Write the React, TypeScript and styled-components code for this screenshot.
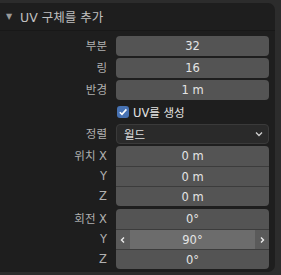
import React from "react";
import styled, { createGlobalStyle } from "styled-components";

const GlobalStyle = createGlobalStyle`
  body {
    margin: 0;
    background: #2c2c2c;
    font-family: "DejaVu Sans", "Noto Sans CJK KR", sans-serif;
  }
`;

const Panel = styled.div`
  width: 275px;
  height: 269px;
  margin-top: 3px;
  background: #1e1e1e;
  border-radius: 0 7px 7px 0;
  box-sizing: border-box;
  overflow: hidden;
`;

const Header = styled.div`
  height: 28px;
  display: flex;
  align-items: center;
  padding-left: 6px;
  gap: 5px;
  color: #c0c0c0;
  font-size: 12.5px;
  border-bottom: 1px solid #181818;
  box-sizing: border-box;
`;

const Caret = styled.span`
  font-size: 8px;
  color: #9a9a9a;
  width: 9px;
`;

const Body = styled.div`
  display: flex;
  flex-direction: column;
  gap: 2px;
  padding: 3px 6px 0 0;
`;

const Row = styled.div<{ $top?: number }>`
  display: grid;
  grid-template-columns: 107px 1fr;
  column-gap: 9px;
  margin-top: ${(p) => p.$top || 0}px;
`;

const Labels = styled.div`
  display: flex;
  flex-direction: column;
`;

const Label = styled.div`
  height: 20px;
  line-height: 20px;
  text-align: right;
  color: #b0b0b0;
  font-size: 11.5px;
  white-space: nowrap;
`;

const Field = styled.div<{ $pos?: "single" | "first" | "mid" | "last" }>`
  height: 20px;
  box-sizing: border-box;
  background: #545454;
  color: #e4e4e4;
  font-size: 11.5px;
  display: flex;
  align-items: center;
  justify-content: center;
  border-radius: ${(p) =>
    p.$pos === "first"
      ? "4px 4px 0 0"
      : p.$pos === "mid"
      ? "0"
      : p.$pos === "last"
      ? "0 0 4px 4px"
      : "4px"};
  border-top: ${(p) => (p.$pos === "mid" || p.$pos === "last" ? "1px solid #3c3c3c" : "none")};
`;

const HoverField = styled(Field)`
  background: #6c6c6c;
  justify-content: space-between;
  overflow: hidden;
`;

const Arrow = styled.span`
  width: 14px;
  height: 100%;
  background: #5a5a5a;
  display: flex;
  align-items: center;
  justify-content: center;
`;

const Group = styled.div`
  display: flex;
  flex-direction: column;
`;

const CheckRow = styled.div`
  height: 20px;
  display: flex;
  align-items: center;
  gap: 4px;
  padding-left: 1px;
  color: #e2e2e2;
  font-size: 11.5px;
`;

const Box = styled.span`
  width: 12px;
  height: 12px;
  border-radius: 3px;
  background: #4772b3;
  display: flex;
  align-items: center;
  justify-content: center;
`;

const Select = styled.div`
  height: 20px;
  box-sizing: border-box;
  background: #2a2a2a;
  border: 1px solid #3a3a3a;
  border-radius: 4px;
  display: flex;
  align-items: center;
  justify-content: space-between;
  padding: 0 4px 0 7px;
  color: #dedede;
  font-size: 11.5px;
`;

type Num = { label: string; value: string };

const Chevron = ({ dir }: { dir: "left" | "right" }) => (
  <svg width="8" height="8" viewBox="0 0 8 8">
    <path
      d={dir === "left" ? "M5 1.5 L2.5 4 L5 6.5" : "M3 1.5 L5.5 4 L3 6.5"}
      fill="none"
      stroke="#ececec"
      strokeWidth="1.4"
    />
  </svg>
);

const NumberGroup = ({ items, hover }: { items: Num[]; hover?: number }) => (
  <>
    <Labels>
      {items.map((it) => (
        <Label key={it.label}>{it.label}</Label>
      ))}
    </Labels>
    <Group>
      {items.map((it, i) => {
        const pos = i === 0 ? "first" : i === items.length - 1 ? "last" : "mid";
        if (i === hover) {
          return (
            <HoverField key={i} $pos={pos}>
              <Arrow>
                <Chevron dir="left" />
              </Arrow>
              {it.value}
              <Arrow>
                <Chevron dir="right" />
              </Arrow>
            </HoverField>
          );
        }
        return (
          <Field key={i} $pos={pos}>
            {it.value}
          </Field>
        );
      })}
    </Group>
  </>
);

export default function App() {
  return (
    <>
      <GlobalStyle />
      <Panel>
        <Header>
          <Caret>▼</Caret>
          UV 구체를 추가
        </Header>
        <Body>
          <Row $top={2}>
            <Label>부분</Label>
            <Field>32</Field>
          </Row>
          <Row>
            <Label>링</Label>
            <Field>16</Field>
          </Row>
          <Row>
            <Label>반경</Label>
            <Field>1 m</Field>
          </Row>
          <Row>
            <span />
            <CheckRow>
              <Box>
                <svg width="10" height="10" viewBox="0 0 10 10">
                  <path d="M1.8 5.2 L4 7.4 L8.4 2.4" fill="none" stroke="#fff" strokeWidth="1.6" />
                </svg>
              </Box>
              UV를 생성
            </CheckRow>
          </Row>
          <Row>
            <Label>정렬</Label>
            <Select>
              월드
              <svg width="10" height="10" viewBox="0 0 10 10">
                <path d="M2 3.5 L5 6.5 L8 3.5" fill="none" stroke="#d0d0d0" strokeWidth="1.3" />
              </svg>
            </Select>
          </Row>
          <Row>
            <NumberGroup
              items={[
                { label: "위치 X", value: "0 m" },
                { label: "Y", value: "0 m" },
                { label: "Z", value: "0 m" },
              ]}
            />
          </Row>
          <Row $top={1}>
            <NumberGroup
              hover={1}
              items={[
                { label: "회전 X", value: "0°" },
                { label: "Y", value: "90°" },
                { label: "Z", value: "0°" },
              ]}
            />
          </Row>
        </Body>
      </Panel>
    </>
  );
}
